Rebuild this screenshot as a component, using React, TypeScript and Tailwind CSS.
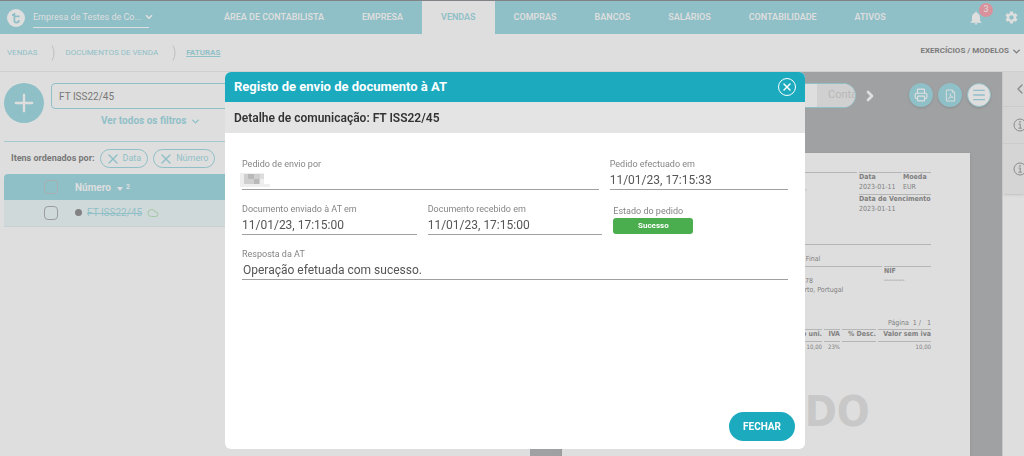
import React from 'react';
import { ChevronDown, ChevronLeft, ChevronRight, Cloud, Menu, Plus, Printer, X } from 'lucide-react';
import { MdNotifications, MdSettings } from 'react-icons/md';

const NAV_ITEMS = [
  'Área de contabilista',
  'Empresa',
  'Vendas',
  'Compras',
  'Bancos',
  'Salários',
  'Contabilidade',
  'Ativos',
];

const Logo = () => (
  <svg viewBox="0 0 18 18" className="size-[18px] shrink-0" aria-hidden="true">
    <circle cx="9" cy="9" r="9" fill="#dedede" />
    <path
      d="M7.4 4V11.2Q7.4 13.6 9.6 13.6Q11.9 13.6 11.9 11M5 6H6.8M7.4 7.4H12.6"
      fill="none"
      stroke="#90c0c7"
      strokeWidth="1.8"
    />
  </svg>
);

const TopBar = () => (
  <header className="flex h-[34px] shrink-0 items-stretch border-t border-[#808286] bg-[#90c0c7] pl-[7px] pr-[5px] text-[#dedede]">
    <div className="flex w-[198px] shrink-0 items-center gap-2">
      <Logo />
      <button type="button" className="flex w-[116px] items-center gap-[2px] border-b border-[#dedede] pb-1 pt-1 text-[9px] leading-3">
        <span className="whitespace-nowrap">Empresa de Testes de Co...</span>
        <ChevronDown className="size-[10px] shrink-0" strokeWidth={4} />
      </button>
    </div>
    <nav className="flex flex-1">
      {NAV_ITEMS.map((item) => (
        <a
          key={item}
          href="#"
          className={
            item === 'Vendas'
              ? 'flex items-center whitespace-nowrap bg-[#dedede] px-[19px] text-[9px] font-semibold uppercase text-[#90c0c7]'
              : 'flex items-center whitespace-nowrap px-[19px] text-[9px] font-semibold uppercase'
          }
        >
          {item}
        </a>
      ))}
    </nav>
    <div className="flex items-center gap-5">
      <button type="button" aria-label="Notificações" className="relative">
        <MdNotifications className="size-4" />
        <span className="absolute -top-[7px] left-[11px] flex size-[14px] items-center justify-center rounded-full bg-[#d9929c] text-[9px]">
          3
        </span>
      </button>
      <button type="button" aria-label="Definições">
        <MdSettings className="size-[15px]" />
      </button>
    </div>
  </header>
);

const Separator = () => (
  <svg viewBox="0 0 4 16" className="h-4 w-1" fill="none" stroke="#bdbfc0" aria-hidden="true">
    <path d="M1 0.5Q5 8 1 15.5" />
  </svg>
);

const Breadcrumb = () => (
  <div className="flex h-[38px] shrink-0 items-center justify-between border-b border-[#cfcfcf] pl-[7px] pr-[2px] text-[8px] uppercase">
    <div className="flex items-center text-[#90c0c7]">
      <a href="#">Vendas</a>
      <span className="pl-[14px] pr-[10px]"><Separator /></span>
      <a href="#">Documentos de venda</a>
      <span className="pl-[14px] pr-[10px]"><Separator /></span>
      <a href="#" className="font-bold underline">Faturas</a>
    </div>
    <button type="button" className="flex items-center gap-[2px] pb-[3px] font-bold uppercase text-[#7b7b7b]">
      Exercícios / Modelos
      <ChevronDown className="size-[11px]" strokeWidth={3} />
    </button>
  </div>
);

const Chip = ({ label }: { label: string }) => (
  <button type="button" className="flex h-[19px] items-center gap-[2px] rounded-full border border-[#90c0c7] pl-1 pr-[6px] text-[9px] text-[#90c0c7]">
    <X className="size-4" strokeWidth={2} />
    {label}
  </button>
);

const DocumentList = () => (
  <section className="flex w-[530px] shrink-0 flex-col pl-1 pr-[5px] pt-[11px]">
    <div className="flex gap-[7px] border-b border-[#a5c9ce] pb-3">
      <button type="button" aria-label="Adicionar" className="flex size-10 shrink-0 items-center justify-center rounded-full bg-[#90c0c7] text-[#dedede]">
        <Plus className="size-7" strokeWidth={2} />
      </button>
      <div className="flex-1">
        <input
          aria-label="Pesquisar"
          defaultValue="FT ISS22/45"
          className="block h-[26px] w-full rounded-sm border border-[#90c0c7] px-[7px] text-[10px] text-[#787878]"
        />
        <button type="button" className="ml-[50px] mt-1 flex items-center gap-1 text-[10px] font-bold leading-4 text-[#90c0c7]">
          Ver todos os filtros
          <ChevronDown className="size-[11px]" strokeWidth={3} />
        </button>
      </div>
    </div>
    <div className="flex items-center gap-[5px] pb-[6px] pl-[7px] pt-[7px]">
      <span className="text-[9px] font-bold text-[#787878]">Itens ordenados por:</span>
      <Chip label="Data" />
      <Chip label="Número" />
    </div>
    <table className="w-full text-left text-[10px]">
      <thead>
        <tr className="h-[26px] bg-[#90c0c7] text-[#dedede]">
          <th className="w-[71px] rounded-tl pl-10">
            <input type="checkbox" aria-label="Selecionar tudo" className="block size-[14px] appearance-none rounded-sm border border-[#a9aeb0]" />
          </th>
          <th>
            <span className="flex items-center">
              Número
              <svg viewBox="0 0 6 4" className="ml-[6px] mt-1 h-1 w-[6px]" fill="currentColor" aria-hidden="true">
                <path d="M0 0H6L3 4Z" />
              </svg>
              <span className="pl-[3px] text-[7px]">2</span>
            </span>
          </th>
        </tr>
      </thead>
      <tbody>
        <tr className="h-[26px] border-b border-[#c6d0d1] bg-[#d0d9da]">
          <td className="pl-10">
            <input type="checkbox" aria-label="Selecionar FT ISS22/45" className="block size-[14px] appearance-none rounded-sm border border-[#9a9c9d]" />
          </td>
          <td>
            <span className="flex items-center">
              <span className="mr-[5px] size-[7px] rounded-full bg-[#828282]" />
              <a href="#" className="text-[#90c0c7] line-through">FT ISS22/45</a>
              <Cloud className="ml-[5px] size-3 text-[#a3c9a5]" strokeWidth={2} />
            </span>
          </td>
        </tr>
      </tbody>
    </table>
  </section>
);

const Invoice = () => (
  <article className="relative mx-8 h-[560px] shrink-0 bg-[#dedede] px-[39px] pt-[19px] font-['DejaVu_Sans_Condensed','DejaVu_Sans',sans-serif] text-[7px] leading-[11px] text-[#808080] shadow">
    <div className="flex gap-[2px]">
      <div className="flex-1 border-t border-[#b5b5b5] pr-[50px] pt-[10px] text-right text-[#a5a5b0]">Serviços,</div>
      <dl className="grid w-[72px] grid-cols-[43px_auto] content-start gap-x-[1px]">
        <dt className="border-t border-[#b5b5b5] font-bold leading-[9px]">Data</dt>
        <dt className="border-t border-[#b5b5b5] font-bold leading-[9px]">Moeda</dt>
        <dd className="pb-px">2023-01-11</dd>
        <dd className="pb-px">EUR</dd>
        <dt className="col-span-2 whitespace-nowrap border-t border-[#b5b5b5] font-bold leading-[9px]">Data de Vencimento</dt>
        <dd className="col-span-2">2023-01-11</dd>
      </dl>
    </div>
    <div className="mt-[29px] border-t border-[#b5b5b5] pl-[165px] pt-[9px]">Consumidor Final</div>
    <div className="flex gap-[2px] pt-px leading-[9px]">
      <div className="flex-1 border-t border-[#b5b5b5] pl-[196px] pt-[10px]">
        <p className="pl-[8px]">78</p>
        <p>Porto, Portugal</p>
      </div>
      <div className="w-[47px] border-t border-[#b5b5b5]">
        <p className="font-bold">NIF</p>
        <p>---------</p>
      </div>
    </div>
    <p className="pt-[23px] text-right">Página&nbsp; 1 /&nbsp;&nbsp; 1</p>
    <div className="-mx-[2px]">
      <table className="w-full border-separate border-spacing-x-[2px] border-spacing-y-0 whitespace-nowrap text-right">
        <thead>
          <tr>
            <th className="border-y border-[#b5b5b5] pb-[2px] leading-[9px]">Preço uni.</th>
            <th className="w-4 border-y border-[#b5b5b5] pb-[2px] leading-[9px]">IVA</th>
            <th className="w-[34px] border-y border-[#b5b5b5] pb-[2px] leading-[9px]">% Desc.</th>
            <th className="w-[53px] border-y border-[#b5b5b5] pb-[2px] leading-[9px]">Valor sem iva</th>
          </tr>
        </thead>
        <tbody className="text-[6px] leading-[10px]">
          <tr>
            <td>10,00</td>
            <td>23%</td>
            <td />
            <td>10,00</td>
          </tr>
        </tbody>
      </table>
    </div>
    <p className="pr-[6px] pt-[34px] text-center text-[43px] font-bold leading-[50px] text-[#c8c8c8]">ANULADO</p>
  </article>
);

const Viewer = () => (
  <section className="flex min-w-0 flex-1 flex-col overflow-hidden bg-[#a0a1a3]">
    <div className="flex h-[81px] shrink-0 items-start gap-[6px] pl-8 pr-[11px] pt-[11px]">
      <div className="flex h-[25px] flex-1 overflow-hidden rounded-full border border-[#90c0c7] bg-[#dedede] text-[11px]">
        <span className="ml-auto flex w-[38px] items-center overflow-hidden bg-[#d0d0d0] pl-[11px] text-[#b8b8b8]">Conta</span>
      </div>
      <button type="button" aria-label="Seguinte" className="mr-[25px] flex h-[25px] items-center text-[#dedede]">
        <ChevronRight className="size-4" strokeWidth={4} />
      </button>
      <div className="flex gap-[5px]">
        <button type="button" aria-label="Imprimir" className="flex size-6 items-center justify-center rounded-full bg-[#90c0c7] text-[#dedede] shadow">
          <Printer className="size-[14px]" strokeWidth={2} />
        </button>
        <button type="button" aria-label="PDF" className="flex size-6 items-center justify-center rounded-full bg-[#90c0c7] text-[#dedede] shadow">
          <svg viewBox="0 0 12 14" className="h-[13px] w-[11px]" fill="none" stroke="currentColor" aria-hidden="true">
            <path d="M1.5 1H8L10.5 3.5V13H1.5Z M8 1V3.5H10.5" />
            <path d="M3.2 11C5.5 9.5 6.2 7 5.8 5C6.2 7.5 7 8.7 9 9C7 8.6 5 9 3.2 11Z" strokeWidth="0.8" />
          </svg>
        </button>
        <button type="button" aria-label="Opções" className="flex size-6 items-center justify-center rounded-full border border-[#90c0c7] bg-[#dedede] text-[#90c0c7] shadow">
          <Menu className="size-4" strokeWidth={2} />
        </button>
      </div>
    </div>
    <Invoice />
  </section>
);

const InfoIcon = () => (
  <svg viewBox="0 0 14 14" className="size-[14px] shrink-0" fill="none" stroke="currentColor" aria-hidden="true">
    <circle cx="7" cy="7" r="6" />
    <path d="M5.6 6H7.2V10M5.5 10.2H8.8" />
    <circle cx="7" cy="3.9" r="0.8" fill="currentColor" stroke="none" />
  </svg>
);

const SidePanel = () => (
  <aside className="w-[22px] shrink-0 overflow-hidden border-l border-[#c8c8c8] text-[#8a8a8a]">
    <div className="bg-[#d5d5d5] shadow">
      <button type="button" aria-label="Expandir" className="flex h-[35px] w-full items-center border-b border-[#cbcbcb] pl-[9px]">
        <ChevronLeft className="size-4 shrink-0" strokeWidth={2} />
      </button>
      <button type="button" aria-label="Informação" className="flex h-[37px] w-full items-center border-b border-[#cbcbcb] pl-[10px]">
        <InfoIcon />
      </button>
      <button type="button" aria-label="Detalhes" className="flex h-[50px] w-full items-center pl-[10px]">
        <InfoIcon />
      </button>
    </div>
  </aside>
);

interface FieldProps {
  label: string;
  className: string;
  children: React.ReactNode;
}

const Field = ({ label, className, children }: FieldProps) => (
  <div className={className}>
    <p className="text-[9px] leading-3 text-[#858585]">{label}</p>
    <div className="flex h-5 items-center border-b border-[#a0a0a0] text-[12px] text-[#555555]">{children}</div>
  </div>
);

// obscured user name
const HiddenName = () => (
  <svg viewBox="0 0 30 14" className="-ml-[2px] h-[14px] w-[30px]" aria-hidden="true">
    <path d="M0 0H24V11H30V14H0Z" fill="#eeeeee" />
    <path d="M4 1H20V11H4Z" fill="#cfcfcf" />
    <path d="M8 1H14V6H8Z M14 6H19V11H14Z" fill="#b9b9b9" />
    <path d="M20 1H24V6H20Z" fill="#dddddd" />
  </svg>
);

const SubmissionDialog = () => (
  <div className="fixed inset-0 flex items-start justify-center pl-[6px] pt-[72px]">
    <div role="dialog" aria-labelledby="dialog-title" className="flex min-h-[377px] w-[580px] flex-col overflow-hidden rounded-md bg-white">
      <div className="flex h-[30px] items-center justify-between bg-[#1caabf] pl-[9px] pr-[9px] text-white">
        <h1 id="dialog-title" className="text-[13px] font-bold">Registo de envio de documento à AT</h1>
        <button type="button" aria-label="Fechar janela" className="flex size-[18px] items-center justify-center rounded-full border border-white">
          <X className="size-3" strokeWidth={3} />
        </button>
      </div>
      <h2 className="flex h-[31px] items-center bg-[#e4e4e4] pl-[9px] text-[12px] font-semibold text-[#333333]">
        Detalhe de comunicação: FT ISS22/45
      </h2>
      <div className="flex flex-1 flex-col gap-[13px] px-[17px] pt-[25px]">
        <div className="flex gap-[11px]">
          <Field label="Pedido de envio por" className="flex-[2]"><HiddenName /></Field>
          <Field label="Pedido efectuado em" className="flex-1">11/01/23, 17:15:33</Field>
        </div>
        <div className="flex gap-[11px]">
          <Field label="Documento enviado à AT em" className="flex-1">11/01/23, 17:15:00</Field>
          <Field label="Documento recebido em" className="flex-1">11/01/23, 17:15:00</Field>
          <div className="flex-1 pt-[2px]">
            <p className="text-[9px] leading-3 text-[#858585]">Estado do pedido</p>
            <span className="mt-px flex h-4 w-20 items-center justify-center rounded-[3px] bg-[#4aae4e] text-[8px] font-bold text-white">
              Sucesso
            </span>
          </div>
        </div>
        <Field label="Resposta da AT" className="w-full">
          <span className="pl-px">Operação efetuada com sucesso.</span>
        </Field>
      </div>
      <div className="flex justify-end px-[10px] pb-2">
        <button type="button" className="h-[29px] rounded-full bg-[#1caabf] px-[14px] text-[10px] font-bold uppercase text-white">
          Fechar
        </button>
      </div>
    </div>
  </div>
);

export default function App() {
  return (
    <div className="flex h-screen flex-col overflow-hidden bg-[#dedede] font-[Roboto,sans-serif]">
      <TopBar />
      <Breadcrumb />
      <main className="flex min-h-0 flex-1">
        <DocumentList />
        <Viewer />
        <SidePanel />
      </main>
      <SubmissionDialog />
    </div>
  );
}
